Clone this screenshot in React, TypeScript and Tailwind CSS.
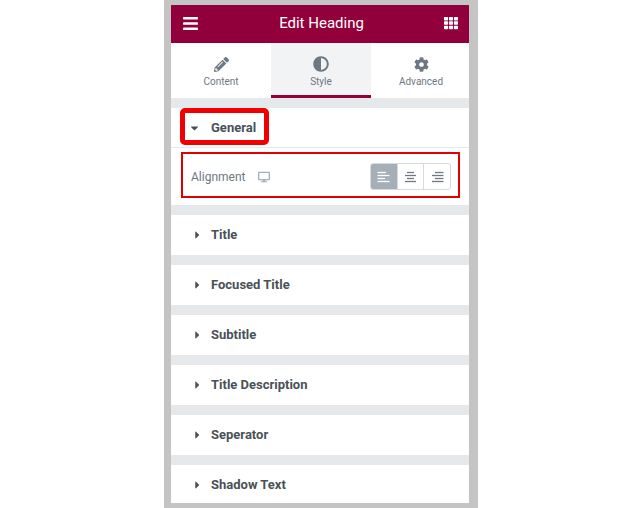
import { FaBars, FaCog, FaDesktop, FaPencilAlt, FaAdjust, FaTh, FaCaretDown, FaCaretRight } from "react-icons/fa";

const sections = ["Title", "Focused Title", "Subtitle", "Title Description", "Seperator", "Shadow Text"];

// x1/x2 pairs for the four lines of each alignment icon
const AlignIcon = ({ lines }: { lines: number[][] }) => (
  <svg width="13" height="12" viewBox="0 0 13 12" stroke="currentColor" strokeWidth="1.3">
    {lines.map(([a, b], i) => (
      <line key={i} x1={a} x2={b} y1={1.5 + i * 3} y2={1.5 + i * 3} />
    ))}
  </svg>
);

const Tab = ({ label, icon, active, className }: { label: string; icon: React.ReactNode; active?: boolean; className: string }) => (
  <div
    className={`${className} flex flex-col items-center pt-[13px] h-[55px] ${
      active ? "bg-[#f1f3f5] border-b-[3px] border-[#92003b]" : "bg-white"
    }`}
  >
    <div className="h-[16px] flex items-center text-[#6d7882] text-[15px]">{icon}</div>
    <div className="mt-[1px] text-[10px] leading-[18px] text-[#6d7882]">{label}</div>
  </div>
);

const App = () => {
  return (
    <div className="w-[626px] h-[508px] bg-white flex pl-[164px] font-['Roboto',sans-serif] overflow-hidden">
      <div className="relative w-[314px] h-[508px] bg-[#c4c4c4] py-[5px] pl-[7px] pr-[9px]">
        <div className="h-[498px] bg-[#e6e9ec] overflow-hidden">
          <header className="h-[38px] bg-[#92003b] text-white flex items-center justify-between pl-[11px] pr-[11px] pb-[2px]">
            <FaBars className="text-[17px]" />
            <span className="text-[15px]">Edit Heading</span>
            <FaTh className="text-[14px]" />
          </header>
          <div className="flex">
            <Tab className="w-[100px]" label="Content" icon={<FaPencilAlt />} />
            <Tab className="w-[100px]" label="Style" icon={<FaAdjust className="text-[16px]" />} active />
            <Tab className="flex-1 pl-[2px]" label="Advanced" icon={<FaCog />} />
          </div>
          <div className="mt-[10px] h-[40px] bg-white border-b border-[#e6e9ec] flex items-center pl-[19px] gap-[12px] text-[#495157]">
            <FaCaretDown className="text-[12px] w-[9px]" />
            <span className="text-[13px] font-bold">General</span>
          </div>
          <div className="h-[57px] bg-white flex items-center pl-[20px] pr-[18px] text-[#6d7882]">
            <span className="text-[12px]">Alignment</span>
            <FaDesktop className="ml-[13px] text-[12px] text-[#a4afb7]" />
            <div className="ml-auto flex h-[27px] w-[81px] rounded-[3px] border border-[#d5dadf] text-[#6d7882]">
              <div className="flex-1 bg-[#a4afb7] text-white flex items-center justify-center rounded-l-[2px]">
                <AlignIcon lines={[[0.5, 9], [0.5, 12.5], [0.5, 8], [0.5, 12.5]]} />
              </div>
              <div className="flex-1 border-l border-[#d5dadf] flex items-center justify-center">
                <AlignIcon lines={[[3, 10], [1, 12], [3, 10], [1, 12]]} />
              </div>
              <div className="flex-1 border-l border-[#d5dadf] flex items-center justify-center">
                <AlignIcon lines={[[4, 12.5], [1, 12.5], [4, 12.5], [1, 12.5]]} />
              </div>
            </div>
          </div>
          {sections.map((s) => (
            <div
              key={s}
              className="mt-[10px] h-[40px] bg-white flex items-center pl-[24px] gap-[11px] text-[#495157]"
            >
              <FaCaretRight className="text-[12px] w-[5px]" />
              <span className="text-[13px] font-bold">{s}</span>
            </div>
          ))}
        </div>
        <div className="absolute left-[16px] top-[108px] w-[89px] h-[37px] border-[5px] border-[#f00000] rounded-[5px]" />
        <div className="absolute left-[17px] top-[152px] w-[279px] h-[46px] border-2 border-[#e00000]" />
      </div>
    </div>
  );
};

export default App;
